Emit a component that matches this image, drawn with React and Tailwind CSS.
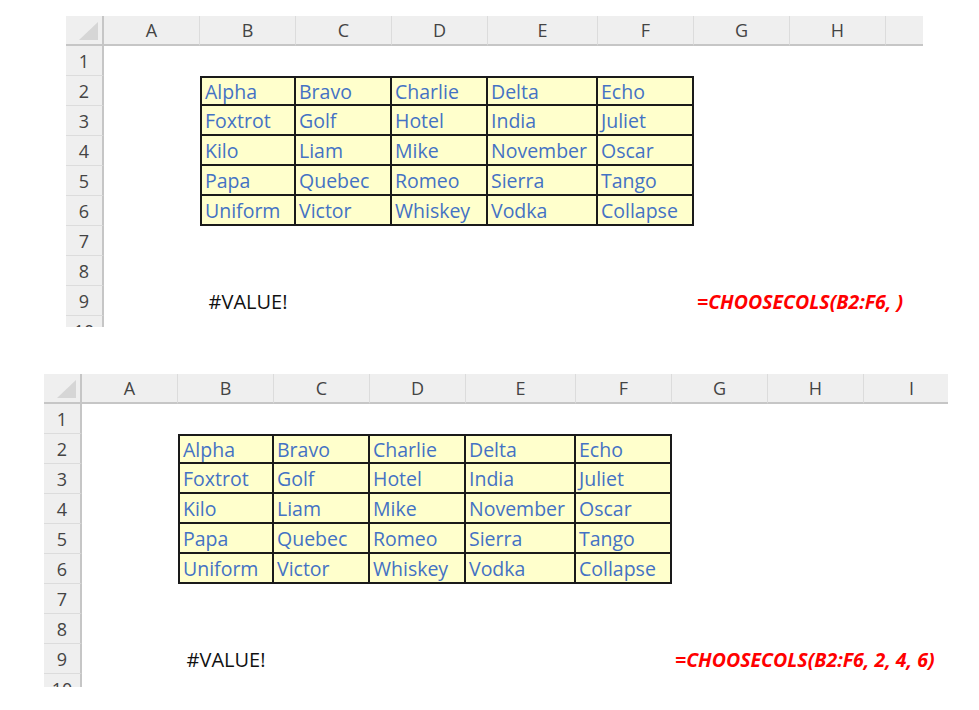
import React from 'react';

const cols = ['A', 'B', 'C', 'D', 'E', 'F', 'G', 'H', 'I'];

const data = [
  ['Alpha', 'Bravo', 'Charlie', 'Delta', 'Echo'],
  ['Foxtrot', 'Golf', 'Hotel', 'India', 'Juliet'],
  ['Kilo', 'Liam', 'Mike', 'November', 'Oscar'],
  ['Papa', 'Quebec', 'Romeo', 'Sierra', 'Tango'],
  ['Uniform', 'Victor', 'Whiskey', 'Vodka', 'Collapse'],
];

const font = { fontFamily: '"Open Sans", "Noto Sans", sans-serif' };

const Corner = () => (
  <div className="relative bg-[#efefef] border-b-2 border-r-2 border-[#c6c6c6]">
    <svg className="absolute right-[4px] bottom-[4px]" width="19" height="18" viewBox="0 0 19 18">
      <polygon points="19,0 19,18 0,18" fill="#d6d6d6" />
    </svg>
  </div>
);

const ColHead = ({ label }) => (
  <div className="flex items-center justify-center bg-[#efefef] border-b-2 border-[#c6c6c6] border-r border-r-[#dcdcdc] text-[18px] text-[#444]">
    {label}
  </div>
);

const RowHead = ({ n }) => (
  <div className="flex items-center justify-center pt-[2px] bg-[#efefef] border-r-2 border-[#c6c6c6] border-b border-b-[#dcdcdc] text-[18px] text-[#444]">
    {n}
  </div>
);

function Cell({ r, c, formula }) {
  // r: 1-based row, c: 0-based column index (0 = A)
  const ti = r - 2;
  const tj = c - 1;
  if (ti >= 0 && ti < 5 && tj >= 0 && tj < 5) {
    return (
      <div
        className={
          'flex items-center pl-[3px] pt-[1px] bg-[#ffffcc] border-[#1a1a1a] border-r-2 border-b-2 text-[19.5px] text-[#4472c4] whitespace-nowrap overflow-hidden ' +
          (ti === 0 ? 'border-t-2 ' : '') +
          (tj === 0 ? 'border-l-2' : '')
        }
      >
        {data[ti][tj]}
      </div>
    );
  }
  if (r === 9 && c === 1) {
    return <div className="flex items-center justify-center pt-[2px] text-[20px] text-[#111]">#VALUE!</div>;
  }
  if (r === 9 && c === 6) {
    return (
      <div className="relative flex items-center pt-[2px]">
        <span className="absolute left-[3px] whitespace-nowrap text-[19.5px] font-bold italic text-[#ff0000]">
          {formula}
        </span>
      </div>
    );
  }
  return <div className="bg-white" />;
}

function Sheet({ className, formula }) {
  const rows = [];
  for (let r = 1; r <= 10; r++) {
    rows.push(<RowHead key={'h' + r} n={r} />);
    for (let c = 0; c < cols.length; c++) {
      rows.push(<Cell key={r + '-' + c} r={r} c={c} formula={formula} />);
    }
  }
  return (
    <div className={'overflow-hidden bg-white ' + className} style={font}>
      <div className="grid grid-cols-[38px_96px_96px_96px_96px_110px_96px_96px_96px_96px] grid-rows-[30px_repeat(10,30px)] w-[1000px]">
        <Corner />
        {cols.map((l) => (
          <ColHead key={l} label={l} />
        ))}
        {rows}
      </div>
    </div>
  );
}

export default function App() {
  return (
    <div className="w-[979px] h-[710px] bg-white pt-[16px]">
      <Sheet className="ml-[66px] w-[857px] h-[311px]" formula="=CHOOSECOLS(B2:F6, )" />
      <Sheet className="ml-[44px] mt-[47px] w-[904px] h-[313px]" formula="=CHOOSECOLS(B2:F6, 2, 4, 6)" />
    </div>
  );
}
